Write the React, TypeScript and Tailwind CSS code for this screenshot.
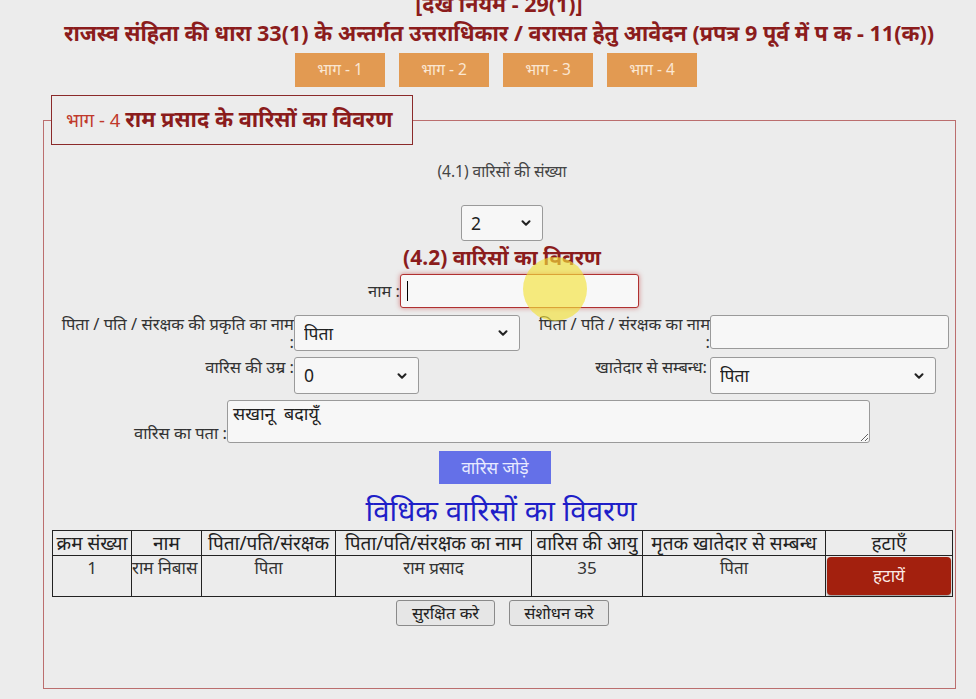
import { ChevronDown } from 'lucide-react';

type Heir = {
  serial: number;
  name: string;
  relationType: string;
  guardianName: string;
  age: number;
  relation: string;
};

const heirs: Heir[] = [
  { serial: 1, name: 'राम निबास', relationType: 'पिता', guardianName: 'राम प्रसाद', age: 35, relation: 'पिता' },
];

const tabs = ['भाग - 1', 'भाग - 2', 'भाग - 3', 'भाग - 4'];

const headers = ['क्रम संख्या', 'नाम', 'पिता/पति/संरक्षक', 'पिता/पति/संरक्षक का नाम', 'वारिस की आयु', 'मृतक खातेदार से सम्बन्ध', 'हटाएँ'];

// fake native select with a chevron
const SelectBox = ({ value, className }: { value: string; className: string }) => (
  <div className={`relative ${className}`}>
    <select
      defaultValue={value}
      className="h-full w-full appearance-none rounded-[3px] border border-[#9a9a9a] bg-[#f7f7f7] pl-[9px] text-[17.5px] text-[#222]"
    >
      <option value={value}>{value}</option>
    </select>
    <ChevronDown className="pointer-events-none absolute right-[10px] top-1/2 h-[14px] w-[14px] -translate-y-1/2 text-[#222]" strokeWidth={3.5} />
  </div>
);

const App = () => {
  return (
    <div className="relative min-h-screen overflow-hidden bg-[#ececec] font-['Noto_Sans','Noto_Sans_Devanagari',sans-serif] text-[#333]">
      {/* Header */}
      <div className="-mt-[9px] pl-[22px] text-center font-bold text-[#8b1c1c]">
        <div className="text-[21.5px] leading-[25px]">[देखें नियम - 29(1)]</div>
        <div className="mt-[3px] text-[21.6px] leading-[28px]">
          राजस्व संहिता की धारा 33(1) के अन्तर्गत उत्तराधिकार / वरासत हेतु आवेदन (प्रपत्र 9 पूर्व में प क - 11(क))
        </div>
      </div>

      {/* Tabs */}
      <div className="mt-[6px] flex justify-center gap-[14px] pl-[16px]">
        {tabs.map((t) => (
          <button key={t} className="h-[34px] w-[90px] bg-[#e29a52] text-[15.5px] text-[#fbe7d2]">
            {t}
          </button>
        ))}
      </div>

      {/* Section */}
      <fieldset className="ml-[43px] mt-[8px] h-[594px] w-[913px] border border-[#bb6e6e]">
        <legend className="ml-[7px] border border-[#8b2a2a] py-[9px] pl-[14px] pr-[20px] leading-[28px]">
          <span className="text-[18.5px] text-[#c0392b]">भाग - 4 </span>
          <span className="text-[21.8px] font-bold text-[#8b1c1c]">राम प्रसाद के वारिसों का विवरण</span>
        </legend>

        <div className="mt-[16px] pl-[5px] text-center text-[15.5px] leading-[20px] text-[#444]">(4.1) वारिसों की संख्या</div>
        <div className="mt-[24px] flex justify-center pl-[5px]">
          <SelectBox value="2" className="h-[36px] w-[82px]" />
        </div>
        <div className="mt-[3px] pl-[5px] text-center text-[21px] font-bold leading-[27px] text-[#8b1c1c]">
          (4.2) वारिसों का विवरण
        </div>

        {/* name */}
        <div className="mt-[3px] flex items-center pl-[306px]">
          <span className="w-[50px] text-right text-[16.5px]">नाम :</span>
          <div className="flex h-[34px] w-[239px] items-center rounded-[3px] border border-[#b03030] bg-[#f8f8f8] pl-[6px] shadow-[0_0_5px_rgba(190,40,40,0.55)]">
            <span className="h-[20px] w-[1px] bg-black" />
          </div>
        </div>

        {/* parent / age rows */}
        <div className="mt-[7px] grid grid-cols-[250px_226px_190px_240px] gap-y-[6px]">
          <span className="text-right text-[16.5px] leading-[18px]">
            पिता / पति / संरक्षक की प्रकृति का नाम
            <br />:
          </span>
          <SelectBox value="पिता" className="h-[36px] w-[226px]" />
          <span className="text-right text-[16.5px] leading-[18px]">
            पिता / पति / संरक्षक का नाम
            <br />:
          </span>
          <div className="h-[34px] w-[239px] rounded-[3px] border border-[#9a9a9a] bg-[#f7f7f7]" />

          <span className="pt-[1px] text-right text-[16.5px] leading-[18px]">वारिस की उम्र :</span>
          <SelectBox value="0" className="h-[37px] w-[125px]" />
          <span className="pr-[3px] pt-[1px] text-right text-[16.5px] leading-[18px]">खातेदार से सम्बन्ध:</span>
          <SelectBox value="पिता" className="h-[37px] w-[226px]" />
        </div>

        {/* address */}
        <div className="mt-[6px] flex items-end pl-[40px]">
          <span className="w-[143px] pb-[1px] text-right text-[16.5px] leading-[18px]">वारिस का पता :</span>
          <textarea
            defaultValue="सखानू  बदायूँ"
            className="h-[43px] w-[643px] rounded-[3px] border border-[#9a9a9a] bg-[#f7f7f7] px-[5px] pt-[0px] text-[18px] leading-[24px] text-[#222]"
          />
        </div>

        <div className="mt-[8px] flex justify-center pr-[9px]">
          <button className="h-[33px] w-[112px] bg-[#6470e8] text-[17px] text-[#e8eaff]">वारिस जोड़े</button>
        </div>

        <div className="mt-[8px] pl-[3px] text-center text-[29.5px] leading-[36px] text-[#1f1fc8]">विधिक वारिसों का विवरण</div>

        {/* table */}
        <table className="ml-[8px] mt-[2px] w-[900px] table-fixed border-collapse text-center text-[#333]">
          <colgroup>
            <col className="w-[79px]" />
            <col className="w-[70px]" />
            <col className="w-[134px]" />
            <col className="w-[196px]" />
            <col className="w-[111px]" />
            <col className="w-[183px]" />
            <col className="w-[127px]" />
          </colgroup>
          <thead>
            <tr className="h-[25px] text-[19px] leading-[22px] text-[#222]">
              {headers.map((h) => (
                <th key={h} className="whitespace-nowrap border border-[#222] px-0 font-normal">
                  {h}
                </th>
              ))}
            </tr>
          </thead>
          <tbody>
            {heirs.map((h) => (
              <tr key={h.serial} className="h-[41px] align-top text-[17px] leading-[24px]">
                <td className="border border-[#222]">{h.serial}</td>
                <td className="whitespace-nowrap border border-[#222] text-left">{h.name}</td>
                <td className="border border-[#222]">{h.relationType}</td>
                <td className="border border-[#222]">{h.guardianName}</td>
                <td className="border border-[#222]">{h.age}</td>
                <td className="border border-[#222]">{h.relation}</td>
                <td className="border border-[#222] p-[1px]">
                  <button className="h-[38px] w-full rounded-[4px] bg-[#a3200e] text-[17px] text-[#fbeae5] shadow-[0_1px_2px_rgba(0,0,0,0.4)]">
                    हटायें
                  </button>
                </td>
              </tr>
            ))}
          </tbody>
        </table>

        <div className="mt-[3px] flex justify-center gap-[14px] pl-[6px]">
          <button className="h-[26px] w-[99px] rounded-[3px] border border-[#8a8a8a] bg-[#e6e6e6] text-[16.5px] leading-[20px] text-[#222]">
            सुरक्षित करे
          </button>
          <button className="h-[26px] w-[100px] rounded-[3px] border border-[#8a8a8a] bg-[#e6e6e6] text-[16.5px] leading-[20px] text-[#222]">
            संशोधन करे
          </button>
        </div>
      </fieldset>

      {/* cursor highlight */}
      <div className="pointer-events-none absolute left-[523px] top-[257px] h-[64px] w-[64px] rounded-full bg-[#f3e23a]/65" />
    </div>
  );
};

export default App;
